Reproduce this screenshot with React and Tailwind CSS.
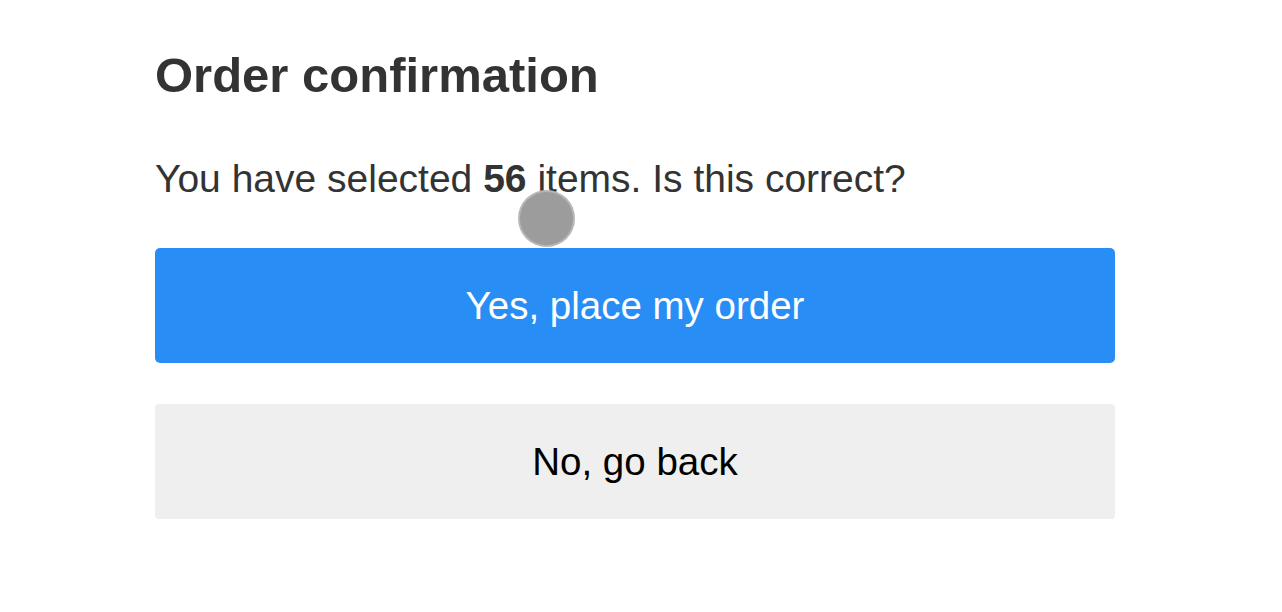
export default function App() {
  return (
    <div className="relative w-[1282px] h-[612px] bg-white" style={{ fontFamily: '"Liberation Sans", Arial, sans-serif' }}>
      <div className="pl-[155px] pr-[167px] pt-[45px] flex flex-col">
        <h1 className="text-[49px] leading-[60px] font-bold text-[#333333]">Order confirmation</h1>
        <p className="mt-[50px] text-[39px] leading-[48px] text-[#333333]">
          You have selected <b className="font-bold">56</b> items. Is this correct?
        </p>
        <button className="mt-[45px] h-[115px] w-full rounded-[5px] bg-[#288ef5] text-white text-[38.5px]">
          Yes, place my order
        </button>
        <button className="mt-[41px] h-[115px] w-full rounded-[4px] bg-[#efefef] text-black text-[38.5px]">
          No, go back
        </button>
      </div>
      <div className="absolute left-[518px] top-[190px] w-[57px] h-[57px] rounded-full bg-[#9c9c9c] border-2 border-[#c8c8c8]/60"></div>
    </div>
  );
}
